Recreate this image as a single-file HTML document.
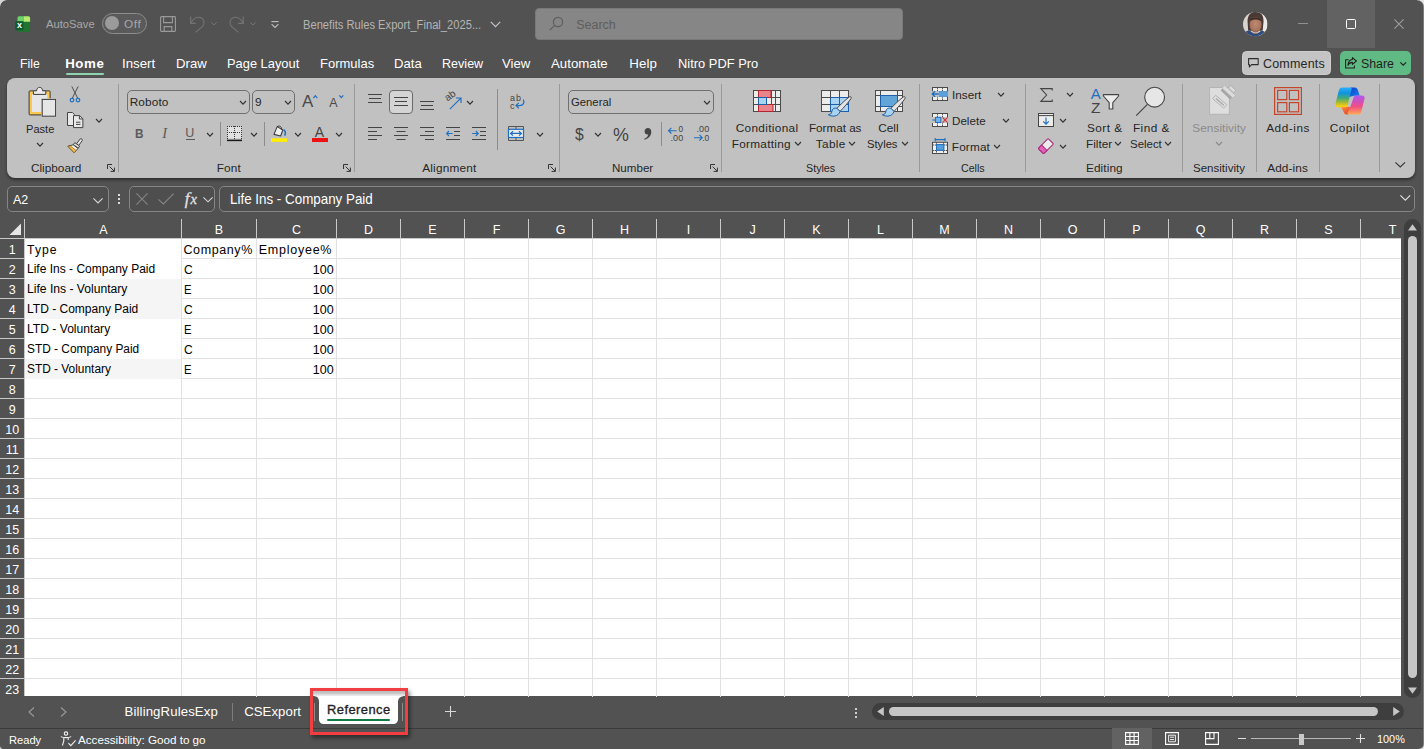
<!DOCTYPE html>
<html lang="en"><head><meta charset="utf-8"><title>Excel</title>
<style>
*{box-sizing:border-box;margin:0;padding:0}
html,body{width:1424px;height:749px;overflow:hidden;background:#525252;}
body{position:relative;font-family:"Liberation Sans",sans-serif;font-size:13px;color:#fff;}
.a{position:absolute}
.t{position:absolute;white-space:nowrap;line-height:1}
svg{position:absolute;overflow:visible}
#ribbon{left:7px;top:78px;width:1408px;height:100px;background:#c1c1c1;border-radius:8px;box-shadow:0 2px 3px rgba(0,0,0,.45)}
.rt{position:absolute;white-space:nowrap;line-height:1;color:#262626;font-size:13px}
.gl{position:absolute;white-space:nowrap;line-height:1;color:#2b2b2b;font-size:12.5px;text-align:center}
.sep{position:absolute;width:1px;background:#9b9b9b}
.box{position:absolute;border:1px solid #6f6f6f;border-radius:5px;background:#c1c1c1}
.dbox{position:absolute;border:1px solid #858585;border-radius:5px;background:#4e4e4e}
.ch{position:absolute;white-space:nowrap;line-height:1;color:#fff;font-size:15px;text-align:center}
.rh{position:absolute;white-space:nowrap;line-height:1;color:#fff;font-size:15px;text-align:center;left:0;width:24px}
.c{position:absolute;white-space:nowrap;line-height:1;color:#000;}
</style></head>
<body>
<div class="a" style="left:1327px;top:0;width:48px;height:48px;background:#626262"></div>
<svg style="left:14.5px;top:15.5px" width="16" height="16.5" viewBox="0 0 16 16.5">
  <rect x="2.5" y="0.3" width="12.6" height="15.6" rx="1.6" fill="#227332"/>
  <path d="M2.5 1.9 a1.6 1.6 0 0 1 1.6-1.6 H8.6 V5.4 H2.5 Z" fill="#6fd169"/>
  <path d="M8.6 0.3 H13.5 a1.6 1.6 0 0 1 1.6 1.6 V5.8 H8.6 Z" fill="#b7ea70"/>
  <rect x="0.3" y="5.2" width="8.2" height="9" rx="1" fill="#0f5a2e"/>
  <text x="4.5" y="12" font-family="Liberation Sans,sans-serif" font-weight="bold" font-size="9" fill="#fff" text-anchor="middle">x</text>
</svg>
<div class="t" style="left:46.2px;top:19px;font-size:11.8px;color:#a8a8a8;transform:scaleX(0.9517);transform-origin:0 0;">AutoSave</div>
<div class="a" style="left:102px;top:13px;width:45px;height:20.5px;border:1px solid #8d8d8d;border-radius:11px;background:#5a5a5a"></div>
<div class="a" style="left:105px;top:16px;width:14px;height:14px;border-radius:7px;background:#9b9b9b"></div>
<div class="t" style="left:124.1px;top:19px;font-size:11.8px;color:#a8a8a8;letter-spacing:0.534px;">Off</div>
<svg style="left:160px;top:16px" width="16" height="16" viewBox="0 0 16 16" fill="none" stroke="#9a9a9a" stroke-width="1.1">
  <path d="M0.6 1.4 a0.8 0.8 0 0 1 0.8-0.8 H14.6 a0.8 0.8 0 0 1 0.8 0.8 V14.6 a0.8 0.8 0 0 1-0.8 0.8 H1.4 a0.8 0.8 0 0 1-0.8-0.8 Z"/>
  <path d="M3.6 0.8 V6.6 H12.4 V0.8"/>
  <path d="M4.2 15.2 V10.6 H11.8 V15.2"/>
</svg>
<svg style="left:189.5px;top:15.5px" width="15" height="17" viewBox="0 0 15 17" fill="none" stroke="#747474" stroke-width="1.1">
  <path d="M0.7 0.6 V7.4 H5.8"/>
  <path d="M1 7 C3 2.6 7 0.2 10.6 1.6 C14.4 3.2 15 7.6 12.6 10.4 L5.6 16.4"/>
</svg>
<svg style="left:210.5px;top:22px" width="6" height="3.4" viewBox="0 0 6 3.4"><path d="M0.3 0.3 L3 3 L5.7 0.3" fill="none" stroke="#747474" stroke-width="1"/></svg>
<svg style="left:228.5px;top:15.5px" width="15" height="17" viewBox="0 0 15 17" fill="none" stroke="#747474" stroke-width="1.1">
  <path d="M14.3 0.6 V7.4 H9.2"/>
  <path d="M14 7 C12 2.6 8 0.2 4.4 1.6 C0.6 3.2 0 7.6 2.4 10.4 L9.4 16.4"/>
</svg>
<svg style="left:249.7px;top:22px" width="6" height="3.4" viewBox="0 0 6 3.4"><path d="M0.3 0.3 L3 3 L5.7 0.3" fill="none" stroke="#747474" stroke-width="1"/></svg>
<svg style="left:270.5px;top:20.5px" width="8" height="7" viewBox="0 0 8 7" fill="none" stroke="#c0c0c0" stroke-width="1.1"><path d="M0.4 0.6 H7.6"/><path d="M0.6 3.2 L4 6.4 L7.4 3.2"/></svg>
<div class="t" style="left:303.2px;top:19px;font-size:12.5px;color:#b4b4b4;transform:scaleX(0.8936);transform-origin:0 0;">Benefits Rules Export_Final_2025...</div>
<svg style="left:490px;top:21px" width="11" height="7" viewBox="0 0 11 7"><path d="M0.8 0.8 L5.5 5.6 L10.2 0.8" fill="none" stroke="#c4c4c4" stroke-width="1.2"/></svg>
<div class="a" style="left:535px;top:8px;width:368px;height:32px;background:#868686;border:1px solid #797979;border-radius:4px"></div>
<svg style="left:549px;top:16px" width="15" height="15" viewBox="0 0 15 15" fill="none" stroke="#5e5e5e" stroke-width="1.2"><circle cx="9" cy="6" r="4.6"/><path d="M5.6 9.4 L0.8 14.2"/></svg>
<div class="t" style="left:576.2px;top:19px;font-size:12.5px;color:#5e5e5e;">Search</div>
<svg style="left:1242.7px;top:11.9px" width="24.4" height="24.4" viewBox="0 0 26 26">
  <defs><clipPath id="av"><circle cx="13" cy="13" r="13"/></clipPath>
  <radialGradient id="avf" cx="0.5" cy="0.45" r="0.6"><stop offset="0" stop-color="#c08a72"/><stop offset="0.7" stop-color="#a87560"/><stop offset="1" stop-color="#8a5c4a"/></radialGradient></defs>
  <g clip-path="url(#av)">
    <rect width="26" height="26" fill="#d9d3d0"/>
    <rect x="17" width="9" height="26" fill="#ebe8e5"/>
    <path d="M5 12 C4 3 9 -0.5 13.5 -0.5 C19.5 -0.5 23 4 21.6 13 L21 20 H5.5 Z" fill="#4a3a35"/>
    <ellipse cx="13.4" cy="13.6" rx="6.4" ry="8.2" fill="url(#avf)"/>
    <path d="M7.4 9.6 C8.6 4.6 18 4.2 19.6 9.8 C16.6 7.4 10.6 7.2 7.4 9.6 Z" fill="#3a2b27"/>
    <path d="M0 26 C1 20.5 5 19.2 8 20.2 C10 23.4 16 23.6 18.4 20.4 C22 19.6 25 21 26 26 Z" fill="#2f4c7e"/>
    <path d="M9.6 21.6 C11.4 24 15.6 24 17.2 21.4 C15.6 22.6 11.4 22.8 9.6 21.6 Z" fill="#a87560"/>
  </g>
</svg>
<div class="a" style="left:1298px;top:23px;width:10px;height:1px;background:#909090"></div>
<div class="a" style="left:1346px;top:19.4px;width:10px;height:10px;border:1.3px solid #fff;border-radius:1.5px"></div>
<svg style="left:1394px;top:19.3px" width="10" height="10" viewBox="0 0 10 10"><path d="M0.4 0.4 L9.6 9.6 M9.6 0.4 L0.4 9.6" stroke="#9c9c9c" stroke-width="1.1" fill="none"/></svg>
<div class="a" style="left:0;top:0;width:7px;height:7px;background:radial-gradient(circle at 100% 100%,transparent 6.4px,#d6d6d6 7.2px)"></div>
<div class="t" style="left:20.2px;top:56.5px;font-size:13.3px;color:#fff;transform:scaleX(0.9190);transform-origin:0 0;">File</div>
<div class="t" style="left:122.2px;top:56.5px;font-size:13.3px;color:#fff;transform:scaleX(0.9980);transform-origin:0 0;">Insert</div>
<div class="t" style="left:175.7px;top:56.5px;font-size:13.3px;color:#fff;transform:scaleX(0.9893);transform-origin:0 0;">Draw</div>
<div class="t" style="left:227.2px;top:56.5px;font-size:13.3px;color:#fff;transform:scaleX(0.9669);transform-origin:0 0;">Page Layout</div>
<div class="t" style="left:320.2px;top:56.5px;font-size:13.3px;color:#fff;transform:scaleX(0.9780);transform-origin:0 0;">Formulas</div>
<div class="t" style="left:394.2px;top:56.5px;font-size:13.3px;color:#fff;transform:scaleX(0.9860);transform-origin:0 0;">Data</div>
<div class="t" style="left:442.2px;top:56.5px;font-size:13.3px;color:#fff;transform:scaleX(0.9448);transform-origin:0 0;">Review</div>
<div class="t" style="left:502.2px;top:56.5px;font-size:13.3px;color:#fff;transform:scaleX(0.9862);transform-origin:0 0;">View</div>
<div class="t" style="left:551.2px;top:56.5px;font-size:13.3px;color:#fff;transform:scaleX(0.9961);transform-origin:0 0;">Automate</div>
<div class="t" style="left:629.2px;top:56.5px;font-size:13.3px;color:#fff;letter-spacing:0.114px;">Help</div>
<div class="t" style="left:678.2px;top:56.5px;font-size:13.3px;color:#fff;transform:scaleX(0.9692);transform-origin:0 0;">Nitro PDF Pro</div>
<div class="t" style="left:65.2px;top:56.5px;font-size:13.3px;color:#fff;letter-spacing:0.582px;font-weight:bold;">Home</div>
<div class="a" style="left:66px;top:73px;width:38px;height:2px;background:#8fd3ae;border-radius:1px"></div>
<div class="a" style="left:1242.4px;top:51.3px;width:89px;height:23.6px;background:#c4c4c4;border:1px solid #cdcdcd;border-radius:4.5px"></div>
<svg style="left:1247.8px;top:58.2px" width="11" height="10" viewBox="0 0 11 10" fill="none" stroke="#2b2b2b" stroke-width="1.05"><path d="M0.6 0.6 H10.2 V6.6 H3.6 L1.4 9 V6.6 H0.6 Z" stroke-linejoin="round"/></svg>
<div class="t" style="left:1262.9px;top:58px;font-size:12.5px;color:#262626;letter-spacing:0.209px;">Comments</div>
<div class="a" style="left:1340px;top:51.3px;width:71.2px;height:23.6px;background:#5fbb83;border-radius:5px"></div>
<svg style="left:1344.8px;top:57.4px" width="12" height="11.6" viewBox="0 0 12 11.6" fill="none" stroke="#1f1f1f" stroke-width="1.05" stroke-linejoin="round"><path d="M3.6 2.8 H0.6 V11 H9.4 V8.6"/><path d="M7.4 0.6 L11.4 4 L7.4 7.4 V5.4 C5.2 5.4 3.8 6.4 3 8.4 C3.2 5 4.8 2.8 7.4 2.6 Z"/></svg>
<div class="t" style="left:1360.6px;top:58px;font-size:12.5px;color:#1f1f1f;transform:scaleX(0.9892);transform-origin:0 0;">Share</div>
<svg style="left:1400.4px;top:61.6px" width="6.4" height="3.6" viewBox="0 0 6.4 3.6"><path d="M0.3 0.3 L3.2 3.2 L6.1 0.3" fill="none" stroke="#1f1f1f" stroke-width="1.1"/></svg>
<div id="ribbon" class="a"></div>
<svg style="left:28px;top:86px" width="29" height="32" viewBox="0 0 29 32">
  <rect x="1.1" y="4.9" width="21" height="24" rx="0.8" fill="#f9c84c" stroke="#3a3a3a" stroke-width="1"/>
  <rect x="4" y="8" width="15.2" height="18" fill="#e6e6e6"/>
  <path d="M5.4 8.4 V5.6 a0.8 0.8 0 0 1 0.8-0.8 H8.6 C8.8 2.6 9.8 1.4 11.6 1.4 C13.4 1.4 14.4 2.6 14.6 4.8 H17 a0.8 0.8 0 0 1 0.8 0.8 V8.4 Z" fill="#ececec" stroke="#3a3a3a" stroke-width="1"/>
  <rect x="13.2" y="12.4" width="15.4" height="18.8" fill="#d6d6d6"/>
  <rect x="14.2" y="13.4" width="13.4" height="16.8" fill="#e6e6e6" stroke="#3a3a3a" stroke-width="1"/>
</svg>
<div class="t" style="left:26.1px;top:124px;font-size:11.8px;color:#262626;transform:scaleX(0.9380);transform-origin:0 0;">Paste</div>
<svg style="left:36.5px;top:143.0px" width="6" height="3.2" viewBox="0 0 6 3.2"><path d="M0 0 L3.0 3.2 L6 0" fill="none" stroke="#333" stroke-width="1.15"/></svg>
<svg style="left:69px;top:86px" width="12" height="17" viewBox="0 0 12 17" fill="none">
  <path d="M2.8 0.4 L8.6 12 M9.2 0.4 L3.4 12" stroke="#505050" stroke-width="1"/>
  <circle cx="3" cy="14.1" r="1.8" stroke="#1e6fc0" stroke-width="1.2"/><circle cx="9" cy="14.1" r="1.8" stroke="#1e6fc0" stroke-width="1.2"/>
</svg>
<svg style="left:67px;top:112px" width="17" height="17" viewBox="0 0 17 17" fill="none" stroke="#444" stroke-width="1">
  <path d="M0.5 0.5 H5.4 L7.6 2.6 V13.5 H0.5 Z" fill="#e8e8e8"/>
  <path d="M6.5 3.6 H12.6 L15.9 6.8 V15.6 H6.5 Z" fill="#e8e8e8"/>
  <path d="M12.4 3.8 V7 H15.6" />
  <path d="M9 10.2 H13.4 M9 12.4 H13.4" />
</svg>
<svg style="left:95.6px;top:119.0px" width="6" height="3.2" viewBox="0 0 6 3.2"><path d="M0 0 L3.0 3.2 L6 0" fill="none" stroke="#333" stroke-width="1.15"/></svg>
<svg style="left:67px;top:138px" width="17" height="16" viewBox="0 0 17 16" fill="none">
  <path d="M13.2 0.9 C14.2 0.2 15.8 1.4 15.2 2.6 L11.8 7.4 L9.6 5.8 Z" fill="#e8e8e8" stroke="#444" stroke-width="1" stroke-linejoin="round"/>
  <path d="M7.8 4.6 L12.6 8.2 L11.2 10.2 L6.4 6.6 Z" fill="#e0e0e0" stroke="#444" stroke-width="1" stroke-linejoin="round"/>
  <path d="M6.2 6.8 L11 10.4 L7.2 14.8 L0.8 8.2 Z" fill="#f0eee8" stroke="#444" stroke-width="1" stroke-linejoin="round"/>
  <path d="M1.4 8.6 L7.2 14.6 L9 12.4 L3.4 8 Z" fill="#f5c04a" stroke="#a87410" stroke-width="0.8" stroke-linejoin="round"/>
</svg>
<div class="t" style="left:30.95px;top:163px;font-size:11.8px;color:#262626;">Clipboard</div>
<svg style="left:107px;top:164px" width="8" height="8" viewBox="0 0 8 8" fill="none" stroke="#333" stroke-width="1"><path d="M0.5 5 V0.5 H5"/><path d="M2.6 2.6 L7.2 7.2 M7.4 3.6 V7.4 H3.6"/></svg>
<div class="a" style="left:118px;top:84px;width:1px;height:88px;background:#9a9a9a"></div>
<div class="box" style="left:127px;top:90px;width:123px;height:24px"></div>
<div class="t" style="left:129.7px;top:97px;font-size:11.8px;color:#262626;letter-spacing:0.131px;">Roboto</div>
<svg style="left:240.0px;top:100.9px" width="6" height="3.2" viewBox="0 0 6 3.2"><path d="M0 0 L3.0 3.2 L6 0" fill="none" stroke="#333" stroke-width="1.15"/></svg>
<div class="box" style="left:252px;top:90px;width:43px;height:24px"></div>
<div class="t" style="left:255px;top:97px;font-size:11.8px;color:#262626;">9</div>
<svg style="left:285.0px;top:100.9px" width="6" height="3.2" viewBox="0 0 6 3.2"><path d="M0 0 L3.0 3.2 L6 0" fill="none" stroke="#333" stroke-width="1.15"/></svg>
<div class="t" style="left:301.8px;top:93px;font-size:17px;color:#4a4a4a;transform:scaleX(0.9961);transform-origin:0 0;">A</div>
<svg style="left:312.8px;top:95px" width="4.6" height="3.4" viewBox="0 0 4.6 3.4"><path d="M0.3 3.1 L2.3 0.7 L4.3 3.1" fill="none" stroke="#1e6fc0" stroke-width="1.15"/></svg>
<div class="t" style="left:329.2px;top:97px;font-size:12.5px;color:#4a4a4a;letter-spacing:1.256px;">A</div>
<svg style="left:338.5px;top:94.8px" width="4.6" height="3.4" viewBox="0 0 4.6 3.4"><path d="M0.3 0.3 L2.3 2.7 L4.3 0.3" fill="none" stroke="#1e6fc0" stroke-width="1.15"/></svg>
<div class="t" style="left:134.7px;top:127px;font-size:13.2px;color:#5a5a5a;transform:scaleX(0.8918);transform-origin:0 0;font-weight:bold;">B</div>
<div class="t" style="left:162.2px;top:125.6px;font-size:14.5px;color:#5a5a5a;font-style:italic;font-family:'Liberation Serif',serif;">I</div>
<div class="t" style="left:185.3px;top:127px;font-size:12.5px;color:#5a5a5a;letter-spacing:0.269px;">U</div>
<div class="a" style="left:186px;top:139px;width:8.5px;height:1px;background:#5a5a5a"></div>
<svg style="left:206.5px;top:133.0px" width="6" height="3.2" viewBox="0 0 6 3.2"><path d="M0 0 L3.0 3.2 L6 0" fill="none" stroke="#333" stroke-width="1.15"/></svg>
<div class="a" style="left:220px;top:122px;width:1px;height:24px;background:#8c8c8c"></div>
<svg style="left:227px;top:126px" width="15" height="15.5" viewBox="0 0 15 15.5" fill="none">
  <rect x="0.5" y="0.5" width="14" height="12" fill="#e2e2e2"/>
  <path d="M0 0.5 H15 M0 6.5 H15 M0.5 0 V13 M7.5 0 V13 M14.5 0 V13" stroke="#3a3a3a" stroke-width="1" stroke-dasharray="1 1"/>
  <path d="M0 14.4 H15" stroke="#1a1a1a" stroke-width="1.5"/>
</svg>
<svg style="left:250.5px;top:133.0px" width="6" height="3.2" viewBox="0 0 6 3.2"><path d="M0 0 L3.0 3.2 L6 0" fill="none" stroke="#333" stroke-width="1.15"/></svg>
<div class="a" style="left:264px;top:122px;width:1px;height:24px;background:#8c8c8c"></div>
<svg style="left:271px;top:125px" width="17" height="18" viewBox="0 0 17 18" fill="none">
  <path d="M6.2 1.6 L11.8 5 L9.6 11 L3 9.4 Z" fill="#f0f0f0" stroke="#3c3c3c" stroke-width="1.1" stroke-linejoin="round"/>
  <path d="M6 1.8 C7.4 0.6 9.4 0.8 10.2 2.4 L10.8 4.4" stroke="#3c3c3c" stroke-width="1"/>
  <path d="M12.6 4.6 C14.4 6 14.8 8.4 13.6 10.6" stroke="#1e6fc0" stroke-width="1.5"/>
  <rect x="0" y="13.3" width="16.3" height="3.6" fill="#ffee00"/>
</svg>
<svg style="left:294.5px;top:133.0px" width="6" height="3.2" viewBox="0 0 6 3.2"><path d="M0 0 L3.0 3.2 L6 0" fill="none" stroke="#333" stroke-width="1.15"/></svg>
<div class="t" style="left:314.8px;top:125px;font-size:14px;color:#444;letter-spacing:1.156px;">A</div>
<div class="a" style="left:312px;top:138.3px;width:16.3px;height:3.6px;background:#ee1111"></div>
<svg style="left:335.5px;top:133.0px" width="6" height="3.2" viewBox="0 0 6 3.2"><path d="M0 0 L3.0 3.2 L6 0" fill="none" stroke="#333" stroke-width="1.15"/></svg>
<div class="t" style="left:216.7px;top:163px;font-size:11.8px;color:#262626;letter-spacing:0.197px;">Font</div>
<svg style="left:343px;top:164px" width="8" height="8" viewBox="0 0 8 8" fill="none" stroke="#333" stroke-width="1"><path d="M0.5 5 V0.5 H5"/><path d="M2.6 2.6 L7.2 7.2 M7.4 3.6 V7.4 H3.6"/></svg>
<div class="a" style="left:354px;top:84px;width:1px;height:88px;background:#9a9a9a"></div>
<svg style="left:0;top:0" width="1" height="1"><path d="M368 94.5 H382 M369 98.5 H381 M368 102.5 H382" stroke="#444" stroke-width="1.1" fill="none"/></svg>
<div class="a" style="left:389px;top:90px;width:24px;height:24px;border:1px solid #6a6a6a;border-radius:4px;background:#d4d4d4"></div>
<svg style="left:0;top:0" width="1" height="1"><path d="M394 97.5 H408 M395 101.5 H407 M394 105.5 H408" stroke="#444" stroke-width="1.1" fill="none"/></svg>
<svg style="left:0;top:0" width="1" height="1"><path d="M420 101.5 H434 M421 105.5 H433 M420 109.5 H434" stroke="#444" stroke-width="1.1" fill="none"/></svg>
<svg style="left:444px;top:92px" width="19" height="19" viewBox="0 0 19 19" fill="none">
  <text x="0" y="0" font-family="Liberation Sans,sans-serif" font-size="10" fill="#444" transform="translate(3.4 9.6) rotate(-36)">ab</text>
  <path d="M5.8 17.2 L16.6 6.4 M12 6 H17 V11" stroke="#1e6fc0" stroke-width="1.15"/>
</svg>
<svg style="left:466.5px;top:100.9px" width="6" height="3.2" viewBox="0 0 6 3.2"><path d="M0 0 L3.0 3.2 L6 0" fill="none" stroke="#333" stroke-width="1.15"/></svg>
<div class="a" style="left:497px;top:89px;width:1px;height:61px;background:#8c8c8c"></div>
<svg style="left:509px;top:93px" width="17" height="18" viewBox="0 0 17 18" fill="none">
  <text x="1" y="7.9" font-family="Liberation Sans,sans-serif" font-size="9" letter-spacing="0.9" fill="#444">ab</text>
  <text x="1" y="16" font-family="Liberation Sans,sans-serif" font-size="9" fill="#444">c</text>
  <path d="M14.2 6.6 C15.8 9.4 14.6 12.6 10.4 12.6 H7.2 M9.8 9.8 L7 12.6 L9.8 15.4" stroke="#1e6fc0" stroke-width="1.2"/>
</svg>
<svg style="left:0;top:0" width="1" height="1"><path d="M368 127.5 H382 M368 131.5 H377 M368 135.5 H382 M368 139.5 H377" stroke="#444" stroke-width="1.1" fill="none"/></svg>
<svg style="left:0;top:0" width="1" height="1"><path d="M394 127.5 H408 M396.5 131.5 H405.5 M394 135.5 H408 M396.5 139.5 H405.5" stroke="#444" stroke-width="1.1" fill="none"/></svg>
<svg style="left:0;top:0" width="1" height="1"><path d="M420 127.5 H434 M425 131.5 H434 M420 135.5 H434 M425 139.5 H434" stroke="#444" stroke-width="1.1" fill="none"/></svg>
<svg style="left:0;top:0" width="1" height="1"><path d="M446 127.5 H460 M454 131.5 H460 M454 135.5 H460 M446 139.5 H460" stroke="#444" stroke-width="1.1" fill="none"/></svg>
<svg style="left:446px;top:130px" width="7" height="7" viewBox="0 0 7 7" fill="none" stroke="#1e6fc0" stroke-width="1.1"><path d="M0.6 3.5 H6.6 M3 1 L0.6 3.5 L3 6"/></svg>
<svg style="left:0;top:0" width="1" height="1"><path d="M472 127.5 H486 M480 131.5 H486 M480 135.5 H486 M472 139.5 H486" stroke="#444" stroke-width="1.1" fill="none"/></svg>
<svg style="left:472px;top:130px" width="7" height="7" viewBox="0 0 7 7" fill="none" stroke="#1e6fc0" stroke-width="1.1"><path d="M0.2 3.5 H6.2 M3.8 1 L6.2 3.5 L3.8 6"/></svg>
<svg style="left:508px;top:126px" width="16" height="15" viewBox="0 0 16 15" fill="none">
  <path d="M0.5 0.5 H15.5 V14.5 H0.5 Z M8 0.5 V3 M8 11.5 V14.5" stroke="#555" stroke-width="1"/>
  <rect x="0.5" y="3.3" width="15" height="8.2" fill="#ececec" stroke="#1e6fc0" stroke-width="1.2"/>
  <path d="M2.6 7.4 H13.4 M5 5.2 L2.6 7.4 L5 9.6 M11 5.2 L13.4 7.4 L11 9.6" stroke="#1e6fc0" stroke-width="1.2"/>
</svg>
<svg style="left:536.5px;top:132.9px" width="6" height="3.2" viewBox="0 0 6 3.2"><path d="M0 0 L3.0 3.2 L6 0" fill="none" stroke="#333" stroke-width="1.15"/></svg>
<div class="t" style="left:422.2px;top:163px;font-size:11.8px;color:#262626;letter-spacing:0.216px;">Alignment</div>
<svg style="left:547.5px;top:164px" width="8" height="8" viewBox="0 0 8 8" fill="none" stroke="#333" stroke-width="1"><path d="M0.5 5 V0.5 H5"/><path d="M2.6 2.6 L7.2 7.2 M7.4 3.6 V7.4 H3.6"/></svg>
<div class="a" style="left:559px;top:84px;width:1px;height:88px;background:#9a9a9a"></div>
<div class="box" style="left:568px;top:90px;width:146px;height:24px"></div>
<div class="t" style="left:570.7px;top:97px;font-size:11.8px;color:#262626;transform:scaleX(0.9575);transform-origin:0 0;">General</div>
<svg style="left:704.0px;top:100.9px" width="6" height="3.2" viewBox="0 0 6 3.2"><path d="M0 0 L3.0 3.2 L6 0" fill="none" stroke="#333" stroke-width="1.15"/></svg>
<div class="t" style="left:574.9px;top:126px;font-size:17px;color:#444;transform:scaleX(0.9188);transform-origin:0 0;">$</div>
<svg style="left:595.3px;top:133.0px" width="6" height="3.2" viewBox="0 0 6 3.2"><path d="M0 0 L3.0 3.2 L6 0" fill="none" stroke="#333" stroke-width="1.15"/></svg>
<div class="t" style="left:612.9px;top:126px;font-size:18px;color:#444;transform:scaleX(0.9928);transform-origin:0 0;">%</div>
<svg style="left:643px;top:127px" width="9" height="14" viewBox="0 0 9 14"><path d="M4.9 0.9 C7 0.9 8.3 2.6 8.3 4.8 C8.3 8.6 5.6 11.6 1.6 12.8 L1.2 11.8 C3.6 10.8 5 9.2 5.2 7.4 C3.2 7.8 1.6 6.4 1.6 4.4 C1.6 2.4 3 0.9 4.9 0.9 Z" fill="#444"/></svg>
<div class="a" style="left:661px;top:122px;width:1px;height:24px;background:#8c8c8c"></div>
<svg style="left:668px;top:126px" width="17" height="16" viewBox="0 0 17 16" fill="none">
  <path d="M0.4 4.7 H8.6 M3.4 1.9 L0.6 4.7 L3.4 7.5" stroke="#1e6fc0" stroke-width="1.15"/>
  <text x="10.4" y="6.4" font-family="Liberation Sans,sans-serif" font-size="8.6" fill="#444" textLength="4.6" lengthAdjust="spacingAndGlyphs">0</text>
  <text x="2.6" y="14.6" font-family="Liberation Sans,sans-serif" font-size="8.6" fill="#444" textLength="12.6" lengthAdjust="spacingAndGlyphs">.00</text>
</svg>
<svg style="left:693px;top:126px" width="17" height="16" viewBox="0 0 17 16" fill="none">
  <text x="3.6" y="6.4" font-family="Liberation Sans,sans-serif" font-size="8.6" fill="#444" textLength="12.6" lengthAdjust="spacingAndGlyphs">.00</text>
  <path d="M1 11.7 H9.2 M6.4 8.9 L9.2 11.7 L6.4 14.5" stroke="#1e6fc0" stroke-width="1.15"/>
  <text x="9.2" y="14.6" font-family="Liberation Sans,sans-serif" font-size="8.6" fill="#444" textLength="7" lengthAdjust="spacingAndGlyphs">.0</text>
</svg>
<div class="t" style="left:612.2px;top:163px;font-size:11.8px;color:#262626;transform:scaleX(0.9817);transform-origin:0 0;">Number</div>
<svg style="left:710px;top:164px" width="8" height="8" viewBox="0 0 8 8" fill="none" stroke="#333" stroke-width="1"><path d="M0.5 5 V0.5 H5"/><path d="M2.6 2.6 L7.2 7.2 M7.4 3.6 V7.4 H3.6"/></svg>
<div class="a" style="left:721px;top:84px;width:1px;height:88px;background:#9a9a9a"></div>
<svg style="left:753px;top:90px" width="28" height="22" viewBox="0 0 28 22" fill="none">
  <rect x="0.5" y="0.5" width="27" height="21" fill="#ececec" stroke="#4a4a4a"/>
  <path d="M5.5 0.5 V21.5 M18.5 0.5 V21.5 M22.5 0.5 V21.5 M0.5 7.5 H27.5 M0.5 14.5 H27.5" stroke="#4a4a4a"/>
  <rect x="5.5" y="0.5" width="12.5" height="7" fill="#e9848b" stroke="#b3262f"/>
  <rect x="5.5" y="14.5" width="14.5" height="7" fill="#e9848b" stroke="#b3262f"/>
  <rect x="5.5" y="7.5" width="8" height="7" fill="#a9d3f3" stroke="#1e5fa8"/>
</svg>
<div class="t" style="left:735.7px;top:123px;font-size:11.8px;color:#262626;letter-spacing:0.342px;">Conditional</div>
<div class="t" style="left:731.7px;top:139px;font-size:11.8px;color:#262626;letter-spacing:0.284px;">Formatting</div>
<svg style="left:795.0px;top:142.0px" width="6" height="3.2" viewBox="0 0 6 3.2"><path d="M0 0 L3.0 3.2 L6 0" fill="none" stroke="#333" stroke-width="1.15"/></svg>
<svg style="left:821px;top:90px" width="32" height="28" viewBox="0 0 32 28" fill="none">
  <rect x="0.5" y="0.5" width="27" height="21" fill="#ececec" stroke="#4a4a4a"/>
  <rect x="9.5" y="7.5" width="18" height="14" fill="#a9d3f3" stroke="#1e5fa8"/>
  <path d="M9.5 0.5 V7.5 M18.5 0.5 V7.5 M0.5 7.5 H9.5 M0.5 14.5 H9.5" stroke="#4a4a4a"/>
  <path d="M18.5 7.5 V21.5 M9.5 14.5 H27.5" stroke="#1e5fa8"/>
<g transform="translate(0 0)">
  <path d="M28.2 7 C29.4 6 30.8 7.2 30 8.6 C27 13 22.6 17.6 19 21.4 L15.8 18.4 C19.6 14.6 24 10.2 28.2 7 Z" fill="#e4e4e4" stroke="#4a4a4a" stroke-width="1" stroke-linejoin="round"/>
  <path d="M15.8 18.2 C13 17.4 11 19.2 10.8 21.6 C10.6 23.6 9.4 24.6 7.4 24.8 C10.8 27 17.6 26.8 19 21.4 Z" fill="#a9d3f3" stroke="#1e5fa8" stroke-width="1" stroke-linejoin="round"/>
</g></svg>
<div class="t" style="left:808.7px;top:123px;font-size:11.8px;color:#262626;transform:scaleX(0.9876);transform-origin:0 0;">Format as</div>
<div class="t" style="left:815.7px;top:139px;font-size:11.8px;color:#262626;letter-spacing:0.374px;">Table</div>
<svg style="left:848.5px;top:142.0px" width="6" height="3.2" viewBox="0 0 6 3.2"><path d="M0 0 L3.0 3.2 L6 0" fill="none" stroke="#333" stroke-width="1.15"/></svg>
<svg style="left:875px;top:90px" width="32" height="28" viewBox="0 0 32 28" fill="none">
  <rect x="0.5" y="0.5" width="27" height="21" fill="#ececec" stroke="#4a4a4a"/>
  <path d="M5.5 0.5 V21.5 M22.5 0.5 V21.5 M0.5 5.5 H27.5 M0.5 16.5 H27.5" stroke="#4a4a4a"/>
  <rect x="5.5" y="5.5" width="17" height="11" fill="#62a5d9" stroke="#1e5fa8"/>
<g transform="translate(0 0)">
  <path d="M28.2 7 C29.4 6 30.8 7.2 30 8.6 C27 13 22.6 17.6 19 21.4 L15.8 18.4 C19.6 14.6 24 10.2 28.2 7 Z" fill="#e4e4e4" stroke="#4a4a4a" stroke-width="1" stroke-linejoin="round"/>
  <path d="M15.8 18.2 C13 17.4 11 19.2 10.8 21.6 C10.6 23.6 9.4 24.6 7.4 24.8 C10.8 27 17.6 26.8 19 21.4 Z" fill="#a9d3f3" stroke="#1e5fa8" stroke-width="1" stroke-linejoin="round"/>
</g></svg>
<div class="t" style="left:878.2px;top:123px;font-size:11.8px;color:#262626;letter-spacing:0.041px;">Cell</div>
<div class="t" style="left:867.45px;top:139px;font-size:11.8px;color:#262626;transform:scaleX(0.9479);transform-origin:0 0;">Styles</div>
<svg style="left:901.8px;top:142.0px" width="6" height="3.2" viewBox="0 0 6 3.2"><path d="M0 0 L3.0 3.2 L6 0" fill="none" stroke="#333" stroke-width="1.15"/></svg>
<div class="t" style="left:805.7px;top:163px;font-size:11.8px;color:#262626;transform:scaleX(0.9089);transform-origin:0 0;">Styles</div>
<div class="a" style="left:919px;top:84px;width:1px;height:88px;background:#9a9a9a"></div>
<svg style="left:932px;top:87px" width="16" height="14" viewBox="0 0 16 14" fill="none">
  <rect x="0.5" y="0.5" width="15" height="13" fill="#efefef" stroke="#4a4a4a"/>
  <path d="M5.5 0.5 V13.5 M10.5 0.5 V13.5 M0.5 4.5 H15.5 M0.5 9.5 H15.5" stroke="#4a4a4a" stroke-dasharray="1.4 0.8"/>
  <rect x="6.6" y="4.2" width="9.4" height="5.6" fill="#5aa0dc"/>
  <rect x="-0.4" y="4.2" width="7" height="5.6" fill="#c1c1c1"/>
  <path d="M0 7 H6.8 M3 4.2 L0.2 7 L3 9.8" stroke="#1e6fc0" stroke-width="1.3"/>
</svg>
<div class="t" style="left:951.8px;top:90px;font-size:11.8px;color:#262626;transform:scaleX(0.9961);transform-origin:0 0;">Insert</div>
<svg style="left:998.4px;top:93.0px" width="6" height="3.2" viewBox="0 0 6 3.2"><path d="M0 0 L3.0 3.2 L6 0" fill="none" stroke="#333" stroke-width="1.15"/></svg>
<svg style="left:932px;top:113px" width="16" height="14" viewBox="0 0 16 14" fill="none">
  <rect x="0.5" y="0.5" width="15" height="13" fill="#efefef" stroke="#4a4a4a"/>
  <path d="M5.5 0.5 V13.5 M10.5 0.5 V13.5 M0.5 4.5 H15.5 M0.5 9.5 H15.5" stroke="#4a4a4a" stroke-dasharray="1.4 0.8"/>
  <rect x="-0.4" y="4" width="17" height="6" fill="#c1c1c1"/>
  <rect x="3.6" y="4.3" width="5.2" height="5.2" fill="#79b4e6" stroke="#1e6fc0" stroke-width="1"/>
  <path d="M0.4 7 H3.4" stroke="#1e6fc0" stroke-width="1"/>
  <path d="M10.6 4.4 L15.6 9.6 M15.6 4.4 L10.6 9.6" stroke="#d13438" stroke-width="1.1"/>
</svg>
<div class="t" style="left:951.8px;top:116px;font-size:11.8px;color:#262626;transform:scaleX(0.9851);transform-origin:0 0;">Delete</div>
<svg style="left:1002.6px;top:119.10000000000001px" width="6" height="3.2" viewBox="0 0 6 3.2"><path d="M0 0 L3.0 3.2 L6 0" fill="none" stroke="#333" stroke-width="1.15"/></svg>
<svg style="left:932px;top:138px" width="16" height="16" viewBox="0 0 16 16" fill="none">
  <path d="M3.2 1.6 H13 M3.2 0 V3.2 M13 0 V3.2" stroke="#1e6fc0" stroke-width="1.1"/>
  <rect x="0.5" y="4.3" width="15" height="11.2" fill="#efefef" stroke="#4a4a4a"/>
  <path d="M4.5 4.3 V15.5 M11.5 4.3 V15.5 M0.5 7 H15.5 M0.5 12.5 H15.5" stroke="#4a4a4a" stroke-dasharray="1.4 0.8"/>
  <rect x="4.5" y="6.6" width="7.4" height="5.6" fill="#5aa0dc" stroke="#1e6fc0" stroke-width="1"/>
</svg>
<div class="t" style="left:951.8px;top:142px;font-size:11.8px;color:#262626;letter-spacing:0.145px;">Format</div>
<svg style="left:993.8px;top:145.0px" width="6" height="3.2" viewBox="0 0 6 3.2"><path d="M0 0 L3.0 3.2 L6 0" fill="none" stroke="#333" stroke-width="1.15"/></svg>
<div class="t" style="left:960.7px;top:163px;font-size:11.8px;color:#262626;transform:scaleX(0.9034);transform-origin:0 0;">Cells</div>
<div class="a" style="left:1025px;top:84px;width:1px;height:88px;background:#9a9a9a"></div>
<svg style="left:1039.5px;top:87.5px" width="13" height="14" viewBox="0 0 13 14" fill="none"><path d="M12.2 2.6 V0.6 H0.8 L6.6 7 L0.8 13.4 H12.2 V11.4" stroke="#444" stroke-width="1.1" stroke-linejoin="miter"/></svg>
<svg style="left:1066.5px;top:93.0px" width="6" height="3.2" viewBox="0 0 6 3.2"><path d="M0 0 L3.0 3.2 L6 0" fill="none" stroke="#333" stroke-width="1.15"/></svg>
<svg style="left:1038px;top:113px" width="16" height="14" viewBox="0 0 16 14" fill="none">
  <rect x="0.5" y="0.5" width="15" height="13" fill="#ececec" stroke="#444"/>
  <path d="M0.5 2.6 H15.5" stroke="#444"/>
  <path d="M8 4.6 V11.2 M5.2 8.4 L8 11.2 L10.8 8.4" stroke="#1e6fc0" stroke-width="1.15"/>
</svg>
<svg style="left:1059.5px;top:119.10000000000001px" width="6" height="3.2" viewBox="0 0 6 3.2"><path d="M0 0 L3.0 3.2 L6 0" fill="none" stroke="#333" stroke-width="1.15"/></svg>
<svg style="left:1038px;top:138px" width="16" height="16" viewBox="0 0 16 16" fill="none">
  <g transform="rotate(-45 8 8)">
    <rect x="0.8" y="4.2" width="14" height="7.6" rx="0.9" fill="#ececec" stroke="#a8327f" stroke-width="1.1"/>
    <path d="M0.8 5.1 a0.9 0.9 0 0 1 0.9-0.9 H5.6 V11.8 H1.7 a0.9 0.9 0 0 1-0.9-0.9 Z" fill="#e660bd" stroke="#a8327f" stroke-width="1.1"/>
  </g>
</svg>
<svg style="left:1059.5px;top:145.0px" width="6" height="3.2" viewBox="0 0 6 3.2"><path d="M0 0 L3.0 3.2 L6 0" fill="none" stroke="#333" stroke-width="1.15"/></svg>
<svg style="left:1090px;top:87px" width="30" height="28" viewBox="0 0 30 28" fill="none">
  <text x="0.8" y="12" font-family="Liberation Sans,sans-serif" font-size="14.6" fill="#1e6fc0" textLength="10" lengthAdjust="spacingAndGlyphs">A</text>
  <text x="0.9" y="26.4" font-family="Liberation Sans,sans-serif" font-size="15.4" fill="#444" textLength="9.4" lengthAdjust="spacingAndGlyphs">Z</text>
  <path d="M13.4 7.6 H28.6 V9 L22.8 15.6 V22 H19.2 V15.6 L13.4 9 Z" fill="#ececec" stroke="#444" stroke-width="1.1" stroke-linejoin="round"/>
</svg>
<div class="t" style="left:1087.0px;top:123px;font-size:11.8px;color:#262626;letter-spacing:0.461px;">Sort &amp;</div>
<div class="t" style="left:1085.8px;top:139px;font-size:11.8px;color:#262626;transform:scaleX(0.9993);transform-origin:0 0;">Filter</div>
<svg style="left:1115.3px;top:142.0px" width="6" height="3.2" viewBox="0 0 6 3.2"><path d="M0 0 L3.0 3.2 L6 0" fill="none" stroke="#333" stroke-width="1.15"/></svg>
<svg style="left:1135px;top:86px" width="31" height="31" viewBox="0 0 31 31" fill="none">
  <circle cx="19.6" cy="11.2" r="9.9" fill="#e6e6e6" stroke="#444" stroke-width="1.1"/>
  <path d="M12.4 18.4 L1.2 29.6" stroke="#444" stroke-width="1.2"/>
</svg>
<div class="t" style="left:1132.9px;top:123px;font-size:11.8px;color:#262626;letter-spacing:0.498px;">Find &amp;</div>
<div class="t" style="left:1129.5px;top:139px;font-size:11.8px;color:#262626;transform:scaleX(0.9696);transform-origin:0 0;">Select</div>
<svg style="left:1164.6px;top:142.0px" width="6" height="3.2" viewBox="0 0 6 3.2"><path d="M0 0 L3.0 3.2 L6 0" fill="none" stroke="#333" stroke-width="1.15"/></svg>
<div class="t" style="left:1085.95px;top:163px;font-size:11.8px;color:#262626;letter-spacing:0.104px;">Editing</div>
<div class="a" style="left:1182px;top:84px;width:1px;height:88px;background:#9a9a9a"></div>
<svg style="left:1208px;top:85px" width="30" height="31" viewBox="0 0 30 31" fill="none">
  <rect x="1.6" y="2.5" width="19.8" height="26.8" fill="#dedede" stroke="#b4b4b4" stroke-width="1"/>
  <g transform="translate(11.7 16.7) rotate(40)"><rect x="-7.4" y="-2.3" width="14.8" height="4.6" rx="0.5" fill="#dedede" stroke="#b2b2b2" stroke-width="0.9"/><path d="M-5 0 H5.4" stroke="#a6a6a6" stroke-width="1.2"/></g>
  <path d="M22.4 0.2 L28 5.6 L25.4 7.6 L20.6 3.2 Z" fill="#dcdcdc" stroke="#b0b0b0" stroke-width="0.9"/>
  <g transform="translate(19.9 7.7) rotate(43)"><rect x="-6.8" y="0.4" width="13" height="3" fill="#a6a6a6"/><rect x="-7.6" y="-3.2" width="15.2" height="3.8" fill="#dcdcdc" stroke="#b4b4b4" stroke-width="0.8"/></g>
</svg>
<div class="t" style="left:1192.3px;top:123px;font-size:11.8px;color:#8a8a8a;letter-spacing:0.059px;">Sensitivity</div>
<svg style="left:1216.4px;top:142.0px" width="6" height="3.2" viewBox="0 0 6 3.2"><path d="M0 0 L3.0 3.2 L6 0" fill="none" stroke="#8a8a8a" stroke-width="1.15"/></svg>
<div class="t" style="left:1193.45px;top:163px;font-size:11.8px;color:#262626;transform:scaleX(0.9782);transform-origin:0 0;">Sensitivity</div>
<div class="a" style="left:1256px;top:84px;width:1px;height:88px;background:#9a9a9a"></div>
<svg style="left:1274px;top:87px" width="28" height="28" viewBox="0 0 28 28" fill="none" stroke="#c5452a" stroke-width="1.2">
  <rect x="0.6" y="0.6" width="26.8" height="26.8"/>
  <rect x="3.6" y="3.4" width="9.2" height="9.2"/><rect x="15.4" y="3.4" width="9.2" height="9.2"/>
  <rect x="3.6" y="15.6" width="9.2" height="9.2"/><rect x="15.4" y="15.6" width="9.2" height="9.2"/>
</svg>
<div class="t" style="left:1266.2px;top:123px;font-size:11.8px;color:#262626;letter-spacing:0.533px;">Add-ins</div>
<div class="t" style="left:1267.2px;top:163px;font-size:11.8px;color:#262626;letter-spacing:0.100px;">Add-ins</div>
<div class="a" style="left:1319px;top:84px;width:1px;height:88px;background:#9a9a9a"></div>
<svg style="left:1335px;top:86.5px" width="30" height="28.5" viewBox="0 0 30 28.5">
  <defs>
    <linearGradient id="cpA" x1="0" y1="0" x2="0" y2="1"><stop offset="0" stop-color="#2ab0f8"/><stop offset="0.28" stop-color="#1192e2"/><stop offset="0.52" stop-color="#3aa984"/><stop offset="0.75" stop-color="#a3ba34"/><stop offset="0.95" stop-color="#f8cf0e"/></linearGradient>
    <linearGradient id="cpB" x1="0" y1="0" x2="0" y2="1"><stop offset="0" stop-color="#b158f2"/><stop offset="0.3" stop-color="#cf50bb"/><stop offset="0.58" stop-color="#f04f83"/><stop offset="0.82" stop-color="#fa8167"/><stop offset="1" stop-color="#ffab55"/></linearGradient>
    <linearGradient id="cpC" x1="0" y1="0" x2="1" y2="1"><stop offset="0" stop-color="#0d3fd0"/><stop offset="1" stop-color="#1c80ea"/></linearGradient>
    <linearGradient id="cpD" x1="0" y1="0" x2="1" y2="1"><stop offset="0" stop-color="#ff8c42"/><stop offset="1" stop-color="#de3a1e"/></linearGradient>
  </defs>
  <path d="M15.6 0.5 H19.8 C21.4 0.5 22.2 1.4 22.8 3 L24.8 8.8 H19 L14.2 10 Z" fill="url(#cpC)"/>
  <path d="M6.2 20 H15.8 L13.2 27.5 H11.6 C10 27.5 9.2 26.6 8.6 25 Z" fill="url(#cpD)"/>
  <path d="M7.2 0.5 H15.4 C16.6 0.5 16.9 1.2 16.6 2.4 L12.6 18.2 C12.2 19.6 11.4 20.2 10 20.2 H3 C1 20.2 0 18.8 0.5 16.8 L3.7 4 C4.3 1.6 5.4 0.5 7.2 0.5 Z" fill="url(#cpA)"/>
  <path d="M21 8.6 H27 C29 8.6 30 10 29.5 12 L26.3 24.4 C25.7 26.6 24.7 27.5 22.9 27.5 H13.6 C12.5 27.5 12.3 26.8 12.7 25.6 L15.8 18.4 L18.6 10.4 C19 9.2 19.8 8.6 21 8.6 Z" fill="url(#cpB)"/>
</svg>
<div class="t" style="left:1329.7px;top:123px;font-size:11.8px;color:#262626;letter-spacing:0.494px;">Copilot</div>
<div class="a" style="left:1379px;top:84px;width:1px;height:88px;background:#9a9a9a"></div>
<svg style="left:1395px;top:161.8px" width="10.5" height="5.5" viewBox="0 0 10.5 5.5"><path d="M0.4 0.4 L5.25 5 L10.1 0.4" fill="none" stroke="#333" stroke-width="1.1"/></svg>
<div class="a" style="left:25px;top:239px;width:1376px;height:457px;background:#fff"></div>
<div class="a" style="left:25px;top:279px;width:156px;height:20px;background:#f5f5f5"></div>
<div class="a" style="left:25px;top:299px;width:156px;height:20px;background:#f5f5f5"></div>
<div class="a" style="left:25px;top:359px;width:156px;height:20px;background:#f5f5f5"></div>
<div class="a" style="left:181px;top:239px;width:1px;height:457px;background:#e1e1e1"></div>
<div class="a" style="left:181px;top:219px;width:1px;height:19px;background:#c9c9c9"></div>
<div class="a" style="left:256px;top:239px;width:1px;height:458px;background:#e1e1e1"></div>
<div class="a" style="left:256px;top:219px;width:1px;height:19px;background:#c9c9c9"></div>
<div class="a" style="left:336px;top:239px;width:1px;height:458px;background:#e1e1e1"></div>
<div class="a" style="left:336px;top:219px;width:1px;height:19px;background:#c9c9c9"></div>
<div class="a" style="left:400px;top:239px;width:1px;height:458px;background:#e1e1e1"></div>
<div class="a" style="left:400px;top:219px;width:1px;height:19px;background:#c9c9c9"></div>
<div class="a" style="left:464px;top:239px;width:1px;height:458px;background:#e1e1e1"></div>
<div class="a" style="left:464px;top:219px;width:1px;height:19px;background:#c9c9c9"></div>
<div class="a" style="left:528px;top:239px;width:1px;height:458px;background:#e1e1e1"></div>
<div class="a" style="left:528px;top:219px;width:1px;height:19px;background:#c9c9c9"></div>
<div class="a" style="left:592px;top:239px;width:1px;height:458px;background:#e1e1e1"></div>
<div class="a" style="left:592px;top:219px;width:1px;height:19px;background:#c9c9c9"></div>
<div class="a" style="left:656px;top:239px;width:1px;height:458px;background:#e1e1e1"></div>
<div class="a" style="left:656px;top:219px;width:1px;height:19px;background:#c9c9c9"></div>
<div class="a" style="left:720px;top:239px;width:1px;height:458px;background:#e1e1e1"></div>
<div class="a" style="left:720px;top:219px;width:1px;height:19px;background:#c9c9c9"></div>
<div class="a" style="left:784px;top:239px;width:1px;height:458px;background:#e1e1e1"></div>
<div class="a" style="left:784px;top:219px;width:1px;height:19px;background:#c9c9c9"></div>
<div class="a" style="left:848px;top:239px;width:1px;height:458px;background:#e1e1e1"></div>
<div class="a" style="left:848px;top:219px;width:1px;height:19px;background:#c9c9c9"></div>
<div class="a" style="left:912px;top:239px;width:1px;height:458px;background:#e1e1e1"></div>
<div class="a" style="left:912px;top:219px;width:1px;height:19px;background:#c9c9c9"></div>
<div class="a" style="left:976px;top:239px;width:1px;height:458px;background:#e1e1e1"></div>
<div class="a" style="left:976px;top:219px;width:1px;height:19px;background:#c9c9c9"></div>
<div class="a" style="left:1040px;top:239px;width:1px;height:458px;background:#e1e1e1"></div>
<div class="a" style="left:1040px;top:219px;width:1px;height:19px;background:#c9c9c9"></div>
<div class="a" style="left:1104px;top:239px;width:1px;height:458px;background:#e1e1e1"></div>
<div class="a" style="left:1104px;top:219px;width:1px;height:19px;background:#c9c9c9"></div>
<div class="a" style="left:1168px;top:239px;width:1px;height:458px;background:#e1e1e1"></div>
<div class="a" style="left:1168px;top:219px;width:1px;height:19px;background:#c9c9c9"></div>
<div class="a" style="left:1232px;top:239px;width:1px;height:458px;background:#e1e1e1"></div>
<div class="a" style="left:1232px;top:219px;width:1px;height:19px;background:#c9c9c9"></div>
<div class="a" style="left:1296px;top:239px;width:1px;height:458px;background:#e1e1e1"></div>
<div class="a" style="left:1296px;top:219px;width:1px;height:19px;background:#c9c9c9"></div>
<div class="a" style="left:1360px;top:239px;width:1px;height:458px;background:#e1e1e1"></div>
<div class="a" style="left:1360px;top:219px;width:1px;height:19px;background:#c9c9c9"></div>
<div class="a" style="left:24px;top:219px;width:1px;height:19px;background:#c9c9c9"></div>
<div class="a" style="left:182px;top:258px;width:1219px;height:1px;background:#e1e1e1"></div>
<div class="a" style="left:0;top:258px;width:24px;height:1px;background:#c9c9c9"></div>
<div class="a" style="left:182px;top:278px;width:1219px;height:1px;background:#e1e1e1"></div>
<div class="a" style="left:0;top:278px;width:24px;height:1px;background:#c9c9c9"></div>
<div class="a" style="left:182px;top:298px;width:1219px;height:1px;background:#e1e1e1"></div>
<div class="a" style="left:0;top:298px;width:24px;height:1px;background:#c9c9c9"></div>
<div class="a" style="left:182px;top:318px;width:1219px;height:1px;background:#e1e1e1"></div>
<div class="a" style="left:0;top:318px;width:24px;height:1px;background:#c9c9c9"></div>
<div class="a" style="left:182px;top:338px;width:1219px;height:1px;background:#e1e1e1"></div>
<div class="a" style="left:0;top:338px;width:24px;height:1px;background:#c9c9c9"></div>
<div class="a" style="left:182px;top:358px;width:1219px;height:1px;background:#e1e1e1"></div>
<div class="a" style="left:0;top:358px;width:24px;height:1px;background:#c9c9c9"></div>
<div class="a" style="left:182px;top:378px;width:1219px;height:1px;background:#e1e1e1"></div>
<div class="a" style="left:0;top:378px;width:24px;height:1px;background:#c9c9c9"></div>
<div class="a" style="left:25px;top:398px;width:1376px;height:1px;background:#e1e1e1"></div>
<div class="a" style="left:0;top:398px;width:24px;height:1px;background:#c9c9c9"></div>
<div class="a" style="left:25px;top:418px;width:1376px;height:1px;background:#e1e1e1"></div>
<div class="a" style="left:0;top:418px;width:24px;height:1px;background:#c9c9c9"></div>
<div class="a" style="left:25px;top:438px;width:1376px;height:1px;background:#e1e1e1"></div>
<div class="a" style="left:0;top:438px;width:24px;height:1px;background:#c9c9c9"></div>
<div class="a" style="left:25px;top:458px;width:1376px;height:1px;background:#e1e1e1"></div>
<div class="a" style="left:0;top:458px;width:24px;height:1px;background:#c9c9c9"></div>
<div class="a" style="left:25px;top:478px;width:1376px;height:1px;background:#e1e1e1"></div>
<div class="a" style="left:0;top:478px;width:24px;height:1px;background:#c9c9c9"></div>
<div class="a" style="left:25px;top:498px;width:1376px;height:1px;background:#e1e1e1"></div>
<div class="a" style="left:0;top:498px;width:24px;height:1px;background:#c9c9c9"></div>
<div class="a" style="left:25px;top:518px;width:1376px;height:1px;background:#e1e1e1"></div>
<div class="a" style="left:0;top:518px;width:24px;height:1px;background:#c9c9c9"></div>
<div class="a" style="left:25px;top:538px;width:1376px;height:1px;background:#e1e1e1"></div>
<div class="a" style="left:0;top:538px;width:24px;height:1px;background:#c9c9c9"></div>
<div class="a" style="left:25px;top:558px;width:1376px;height:1px;background:#e1e1e1"></div>
<div class="a" style="left:0;top:558px;width:24px;height:1px;background:#c9c9c9"></div>
<div class="a" style="left:25px;top:578px;width:1376px;height:1px;background:#e1e1e1"></div>
<div class="a" style="left:0;top:578px;width:24px;height:1px;background:#c9c9c9"></div>
<div class="a" style="left:25px;top:598px;width:1376px;height:1px;background:#e1e1e1"></div>
<div class="a" style="left:0;top:598px;width:24px;height:1px;background:#c9c9c9"></div>
<div class="a" style="left:25px;top:618px;width:1376px;height:1px;background:#e1e1e1"></div>
<div class="a" style="left:0;top:618px;width:24px;height:1px;background:#c9c9c9"></div>
<div class="a" style="left:25px;top:638px;width:1376px;height:1px;background:#e1e1e1"></div>
<div class="a" style="left:0;top:638px;width:24px;height:1px;background:#c9c9c9"></div>
<div class="a" style="left:25px;top:658px;width:1376px;height:1px;background:#e1e1e1"></div>
<div class="a" style="left:0;top:658px;width:24px;height:1px;background:#c9c9c9"></div>
<div class="a" style="left:25px;top:678px;width:1376px;height:1px;background:#e1e1e1"></div>
<div class="a" style="left:0;top:678px;width:24px;height:1px;background:#c9c9c9"></div>
<div class="a" style="left:0;top:238px;width:1401px;height:1px;background:#c9c9c9"></div>
<div class="a" style="left:24px;top:239px;width:1px;height:457px;background:#c9c9c9"></div>
<svg class="a" style="left:9px;top:223px" width="13" height="13" viewBox="0 0 13 13"><path d="M12 0.5 V12 H0.5 Z" fill="#e6e6e6"/></svg>
<div class="t" style="left:99.33px;top:224px;font-size:12.5px;color:#fff;">A</div>
<div class="t" style="left:214.83px;top:224px;font-size:12.5px;color:#fff;">B</div>
<div class="t" style="left:291.98px;top:224px;font-size:12.5px;color:#fff;">C</div>
<div class="t" style="left:363.98px;top:224px;font-size:12.5px;color:#fff;">D</div>
<div class="t" style="left:428.33px;top:224px;font-size:12.5px;color:#fff;">E</div>
<div class="t" style="left:492.68px;top:224px;font-size:12.5px;color:#fff;">F</div>
<div class="t" style="left:555.63px;top:224px;font-size:12.5px;color:#fff;">G</div>
<div class="t" style="left:619.98px;top:224px;font-size:12.5px;color:#fff;">H</div>
<div class="t" style="left:686.76px;top:224px;font-size:12.5px;color:#fff;">I</div>
<div class="t" style="left:749.38px;top:224px;font-size:12.5px;color:#fff;">J</div>
<div class="t" style="left:812.33px;top:224px;font-size:12.5px;color:#fff;">K</div>
<div class="t" style="left:877.02px;top:224px;font-size:12.5px;color:#fff;">L</div>
<div class="t" style="left:939.29px;top:224px;font-size:12.5px;color:#fff;">M</div>
<div class="t" style="left:1003.98px;top:224px;font-size:12.5px;color:#fff;">N</div>
<div class="t" style="left:1067.63px;top:224px;font-size:12.5px;color:#fff;">O</div>
<div class="t" style="left:1132.33px;top:224px;font-size:12.5px;color:#fff;">P</div>
<div class="t" style="left:1195.63px;top:224px;font-size:12.5px;color:#fff;">Q</div>
<div class="t" style="left:1259.98px;top:224px;font-size:12.5px;color:#fff;">R</div>
<div class="t" style="left:1324.33px;top:224px;font-size:12.5px;color:#fff;">S</div>
<div class="t" style="left:1388.68px;top:224px;font-size:12.5px;color:#fff;">T</div>
<div class="t" style="left:8.72px;top:244px;font-size:12.5px;color:#fff;">1</div>
<div class="t" style="left:8.72px;top:264px;font-size:12.5px;color:#fff;">2</div>
<div class="t" style="left:8.72px;top:284px;font-size:12.5px;color:#fff;">3</div>
<div class="t" style="left:8.72px;top:304px;font-size:12.5px;color:#fff;">4</div>
<div class="t" style="left:8.72px;top:324px;font-size:12.5px;color:#fff;">5</div>
<div class="t" style="left:8.72px;top:344px;font-size:12.5px;color:#fff;">6</div>
<div class="t" style="left:8.72px;top:364px;font-size:12.5px;color:#fff;">7</div>
<div class="t" style="left:8.72px;top:384px;font-size:12.5px;color:#fff;">8</div>
<div class="t" style="left:8.72px;top:404px;font-size:12.5px;color:#fff;">9</div>
<div class="t" style="left:5.25px;top:424px;font-size:12.5px;color:#fff;">10</div>
<div class="t" style="left:5.71px;top:444px;font-size:12.5px;color:#fff;">11</div>
<div class="t" style="left:5.25px;top:464px;font-size:12.5px;color:#fff;">12</div>
<div class="t" style="left:5.25px;top:484px;font-size:12.5px;color:#fff;">13</div>
<div class="t" style="left:5.25px;top:504px;font-size:12.5px;color:#fff;">14</div>
<div class="t" style="left:5.25px;top:524px;font-size:12.5px;color:#fff;">15</div>
<div class="t" style="left:5.25px;top:544px;font-size:12.5px;color:#fff;">16</div>
<div class="t" style="left:5.25px;top:564px;font-size:12.5px;color:#fff;">17</div>
<div class="t" style="left:5.25px;top:584px;font-size:12.5px;color:#fff;">18</div>
<div class="t" style="left:5.25px;top:604px;font-size:12.5px;color:#fff;">19</div>
<div class="t" style="left:5.25px;top:624px;font-size:12.5px;color:#fff;">20</div>
<div class="t" style="left:5.25px;top:644px;font-size:12.5px;color:#fff;">21</div>
<div class="t" style="left:5.25px;top:664px;font-size:12.5px;color:#fff;">22</div>
<div class="t" style="left:5.25px;top:684px;font-size:12.5px;color:#fff;">23</div>
<div class="t" style="left:27.1px;top:244px;font-size:12.2px;color:#000;letter-spacing:1.026px;">Type</div>
<div class="t" style="left:183.5px;top:244px;font-size:12.5px;color:#000;letter-spacing:0.596px;">Company%</div>
<div class="t" style="left:258.7px;top:244px;font-size:12.5px;color:#000;letter-spacing:0.762px;">Employee%</div>
<div class="t" style="left:26.5px;top:263px;font-size:12.5px;color:#000;transform:scaleX(0.9610);transform-origin:0 0;">Life Ins - Company Paid</div>
<div class="t" style="left:183.5px;top:264px;font-size:12.5px;color:#000;transform:scaleX(0.9633);transform-origin:0 0;">C</div>
<div class="t" style="left:312.7px;top:264px;font-size:12.5px;color:#000;letter-spacing:0.120px;">100</div>
<div class="t" style="left:26.5px;top:283px;font-size:12.5px;color:#000;transform:scaleX(0.9698);transform-origin:0 0;">Life Ins - Voluntary</div>
<div class="t" style="left:183.5px;top:284px;font-size:12.5px;color:#000;transform:scaleX(0.8989);transform-origin:0 0;">E</div>
<div class="t" style="left:312.7px;top:284px;font-size:12.5px;color:#000;letter-spacing:0.120px;">100</div>
<div class="t" style="left:26.5px;top:303px;font-size:12.5px;color:#000;transform:scaleX(0.9612);transform-origin:0 0;">LTD - Company Paid</div>
<div class="t" style="left:183.5px;top:304px;font-size:12.5px;color:#000;transform:scaleX(0.9633);transform-origin:0 0;">C</div>
<div class="t" style="left:312.7px;top:304px;font-size:12.5px;color:#000;letter-spacing:0.120px;">100</div>
<div class="t" style="left:26.5px;top:323px;font-size:12.5px;color:#000;transform:scaleX(0.9683);transform-origin:0 0;">LTD - Voluntary</div>
<div class="t" style="left:183.5px;top:324px;font-size:12.5px;color:#000;transform:scaleX(0.8989);transform-origin:0 0;">E</div>
<div class="t" style="left:312.7px;top:324px;font-size:12.5px;color:#000;letter-spacing:0.120px;">100</div>
<div class="t" style="left:26.5px;top:343px;font-size:12.5px;color:#000;transform:scaleX(0.9500);transform-origin:0 0;">STD - Company Paid</div>
<div class="t" style="left:183.5px;top:344px;font-size:12.5px;color:#000;transform:scaleX(0.9633);transform-origin:0 0;">C</div>
<div class="t" style="left:312.7px;top:344px;font-size:12.5px;color:#000;letter-spacing:0.120px;">100</div>
<div class="t" style="left:26.5px;top:363px;font-size:12.5px;color:#000;transform:scaleX(0.9509);transform-origin:0 0;">STD - Voluntary</div>
<div class="t" style="left:183.5px;top:364px;font-size:12.5px;color:#000;transform:scaleX(0.8989);transform-origin:0 0;">E</div>
<div class="t" style="left:312.7px;top:364px;font-size:12.5px;color:#000;letter-spacing:0.120px;">100</div>
<div class="dbox" style="left:7px;top:186px;width:102px;height:26px"></div>
<div class="t" style="left:13.2px;top:194px;font-size:12.5px;color:#fff;transform:scaleX(0.9937);transform-origin:0 0;">A2</div>
<svg style="left:92.5px;top:197.5px" width="10" height="5.5" viewBox="0 0 10 5.5"><path d="M0.4 0.4 L5 5 L9.6 0.4" fill="none" stroke="#d8d8d8" stroke-width="1.1"/></svg>
<div class="a" style="left:118px;top:194.2px;width:2.2px;height:2.2px;background:#dcdcdc"></div>
<div class="a" style="left:118px;top:198.2px;width:2.2px;height:2.2px;background:#dcdcdc"></div>
<div class="a" style="left:118px;top:202.2px;width:2.2px;height:2.2px;background:#dcdcdc"></div>
<div class="dbox" style="left:129px;top:186px;width:86px;height:26px"></div>
<svg style="left:136px;top:193px" width="12" height="12" viewBox="0 0 12 12"><path d="M0.4 0.4 L11.6 11.6 M11.6 0.4 L0.4 11.6" stroke="#858585" stroke-width="1.1" fill="none"/></svg>
<svg style="left:158px;top:193px" width="16" height="12" viewBox="0 0 16 12"><path d="M0.4 6.4 L5.4 11 L15.6 0.6" stroke="#858585" stroke-width="1.1" fill="none"/></svg>
<div class="t" style="left:184.8px;top:190px;font-size:17px;color:#e2e2e2;font-style:italic;font-family:'Liberation Serif',serif;-webkit-text-stroke:0.3px #e2e2e2;">f</div>
<div class="t" style="left:190.4px;top:192.4px;font-size:14.5px;color:#e2e2e2;font-style:italic;font-family:'Liberation Serif',serif;-webkit-text-stroke:0.3px #e2e2e2;">x</div>
<svg style="left:202.5px;top:197px" width="10" height="5.2" viewBox="0 0 10 5.2"><path d="M0.4 0.4 L5 4.8 L9.6 0.4" fill="none" stroke="#d8d8d8" stroke-width="1.1"/></svg>
<div class="dbox" style="left:219px;top:186px;width:1196px;height:26px"></div>
<div class="t" style="left:230.4px;top:193px;font-size:13.9px;color:#fff;transform:scaleX(0.9632);transform-origin:0 0;">Life Ins - Company Paid</div>
<svg style="left:1400.3px;top:194.6px" width="10.6" height="5.6" viewBox="0 0 10.6 5.6"><path d="M0.4 0.4 L5.3 5.2 L10.2 0.4" fill="none" stroke="#e0e0e0" stroke-width="1.1"/></svg>
<div class="a" style="left:1404px;top:219px;width:17px;height:479px;background:#3e3e3e;border-radius:8.5px"></div>
<div class="a" style="left:1408px;top:236px;width:9px;height:442px;background:#c6c6c6;border-radius:4.5px"></div>
<svg style="left:1408px;top:224px" width="9" height="7" viewBox="0 0 9 7"><path d="M4.5 0.2 L9 6.6 H0 Z" fill="#c6c6c6"/></svg>
<svg style="left:1408px;top:687px" width="9" height="7" viewBox="0 0 9 7"><path d="M4.5 6.8 L9 0.4 H0 Z" fill="#c6c6c6"/></svg>
<svg style="left:27.5px;top:707px" width="7" height="10" viewBox="0 0 7 10"><path d="M6 0.5 L1 5 L6 9.5" fill="none" stroke="#9a9a9a" stroke-width="1.1"/></svg>
<svg style="left:60px;top:707px" width="7" height="10" viewBox="0 0 7 10"><path d="M1 0.5 L6 5 L1 9.5" fill="none" stroke="#9a9a9a" stroke-width="1.1"/></svg>
<div class="t" style="left:124.6px;top:705px;font-size:13.2px;color:#fff;letter-spacing:0.113px;">BillingRulesExp</div>
<div class="a" style="left:231.5px;top:703px;width:1px;height:18px;background:#7d7d7d"></div>
<div class="t" style="left:244.2px;top:705px;font-size:13.2px;color:#fff;letter-spacing:0.052px;">CSExport</div>
<div class="a" style="left:313px;top:691px;width:92px;height:5px;background:linear-gradient(#bcbcbc,#c8c8c8 45%,#f0f0f0)"></div>
<svg style="left:313px;top:696px" width="92" height="29" viewBox="0 0 92 29"><path d="M0 0 H92 C88 0 85 2 85 6 V23.5 a4.5 4.5 0 0 1-4.5 4.5 H10.5 a4.5 4.5 0 0 1-4.5-4.5 V6 C6 2 4 0 0 0 Z" fill="#fff"/></svg>
<div class="a" style="left:314px;top:703px;width:1px;height:18px;background:#8c8c8c"></div>
<div class="a" style="left:402px;top:703px;width:1px;height:18px;background:#8c8c8c"></div>
<div class="t" style="left:327.0px;top:704px;font-size:12.9px;color:#1f1f1f;letter-spacing:0.464px;-webkit-text-stroke:0.35px #1f1f1f;">Reference</div>
<div class="a" style="left:327px;top:719px;width:63px;height:2px;background:#107c41;border-radius:1px"></div>
<svg style="left:445px;top:706px" width="11" height="11" viewBox="0 0 11 11"><path d="M5.5 0 V11 M0 5.5 H11" stroke="#d8d8d8" stroke-width="1.1" fill="none"/></svg>
<div class="a" style="left:855px;top:708px;width:2px;height:2px;background:#d0d0d0"></div>
<div class="a" style="left:855px;top:712px;width:2px;height:2px;background:#d0d0d0"></div>
<div class="a" style="left:855px;top:716px;width:2px;height:2px;background:#d0d0d0"></div>
<div class="a" style="left:872px;top:703px;width:532px;height:17px;background:#3e3e3e;border-radius:8.5px"></div>
<div class="a" style="left:889px;top:707px;width:489px;height:9px;background:#c6c6c6;border-radius:4.5px"></div>
<svg style="left:877px;top:707px" width="7" height="9" viewBox="0 0 7 9"><path d="M0.2 4.5 L6.8 0 V9 Z" fill="#c6c6c6"/></svg>
<svg style="left:1392.5px;top:707px" width="7" height="9" viewBox="0 0 7 9"><path d="M6.8 4.5 L0.2 0 V9 Z" fill="#c6c6c6"/></svg>
<div class="a" style="left:0;top:728px;width:1424px;height:1px;background:#3b3b3b"></div>
<div class="t" style="left:9.3px;top:735px;font-size:11.8px;color:#fff;transform:scaleX(0.9440);transform-origin:0 0;">Ready</div>
<svg style="left:60px;top:731px" width="17" height="16" viewBox="0 0 17 16" fill="none" stroke="#f0f0f0" stroke-width="1.1">
  <circle cx="6" cy="2.6" r="1.7"/><path d="M0.8 5.6 C3 7 9 7 11.2 5.6 M3.8 6.6 V10 L2.4 14.6 M8.2 6.6 V9"/><path d="M8.4 12.2 L10.8 14.6 L15.6 9.4"/></svg>
<div class="t" style="left:78.4px;top:735px;font-size:11.8px;color:#fff;transform:scaleX(0.9877);transform-origin:0 0;">Accessibility: Good to go</div>
<div class="a" style="left:1112px;top:728px;width:40px;height:21px;background:#626262"></div>
<svg style="left:1124.5px;top:732px" width="14" height="13" viewBox="0 0 14 13" fill="none" stroke="#fff" stroke-width="1.1"><path d="M0.6 0.6 H13.4 V12.4 H0.6 Z M0.6 4.5 H13.4 M0.6 8.5 H13.4 M4.9 0.6 V12.4 M9.1 0.6 V12.4"/></svg>
<svg style="left:1165px;top:732px" width="14" height="13" viewBox="0 0 14 13" fill="none" stroke="#fff" stroke-width="1.1"><path d="M0.6 0.6 H13.4 V12.4 H0.6 Z"/><path d="M3.6 3.2 H10.4 V9.8 H3.6 Z M5 5.2 H9 M5 7.6 H9" stroke-width="0.9"/></svg>
<svg style="left:1204.5px;top:732px" width="14" height="13" viewBox="0 0 14 13" fill="none" stroke="#fff" stroke-width="1.1"><path d="M0.6 0.6 H13.4 V12.4 H0.6 Z M0.6 6.6 H9 V0.6 M4.8 0.6 V6.6"/></svg>
<div class="a" style="left:1238px;top:738px;width:8px;height:1px;background:#e0e0e0"></div>
<div class="a" style="left:1251px;top:738px;width:100px;height:1px;background:#b8b8b8"></div>
<div class="a" style="left:1299px;top:733.5px;width:5px;height:11.5px;background:#c8c8c8"></div>
<svg style="left:1356px;top:734px" width="9" height="9" viewBox="0 0 9 9"><path d="M4.5 0 V9 M0 4.5 H9" stroke="#e0e0e0" stroke-width="1.1" fill="none"/></svg>
<div class="t" style="left:1376.8px;top:734px;font-size:11.8px;color:#fff;transform:scaleX(0.9209);transform-origin:0 0;">100%</div>
<div class="a" style="left:310px;top:688px;width:98px;height:47px;border:3px solid #f23d41;box-shadow:2px 3px 4px rgba(0,0,0,.45)"></div>
<div class="a" style="left:1423px;top:0;width:1px;height:749px;background:#7e7e7e"></div>
<div class="a" style="left:1417px;top:0;width:7px;height:7px;background:radial-gradient(circle at 0 100%,transparent 6.2px,#8a8a8a 6.6px,#e4e4e4 7.4px)"></div>
<div class="a" style="left:1419px;top:744px;width:5px;height:5px;background:radial-gradient(circle at 0 0,transparent 4.2px,#8a8a8a 4.6px,#e4e4e4 5.4px)"></div>
<div class="a" style="left:0;top:746px;width:3px;height:3px;background:radial-gradient(circle at 100% 0,transparent 2.4px,#d0d0d0 3.2px)"></div>
</body></html>
